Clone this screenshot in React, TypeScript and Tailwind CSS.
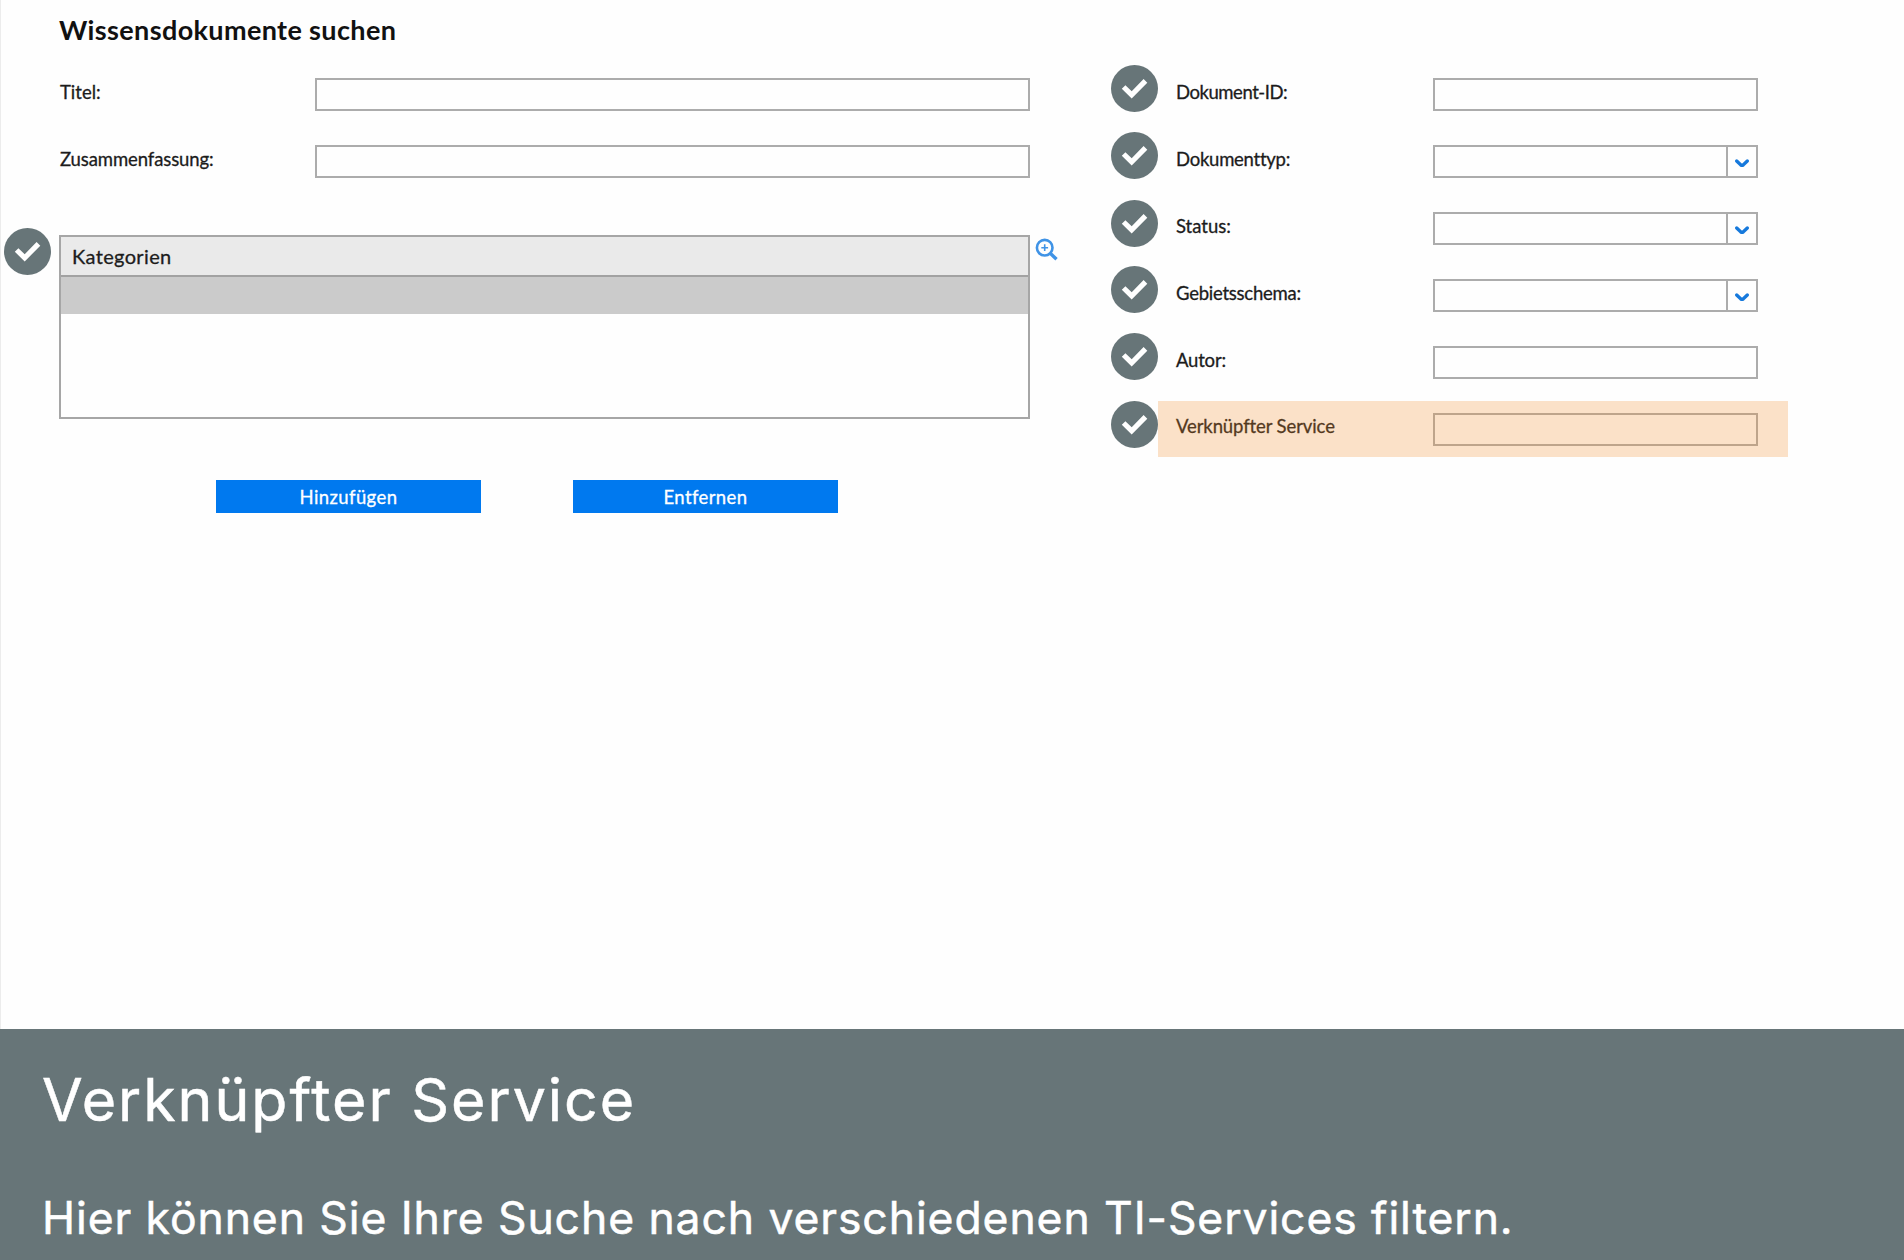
import React from "react";

const label =
  "font-['Lato',sans-serif] text-[18.5px] leading-[24px] text-[#1c1c1c] whitespace-nowrap [-webkit-text-stroke:0.3px_#1c1c1c]";

function Check({ className = "" }: { className?: string }) {
  return (
    <svg viewBox="0 0 47 47" className={`size-[47px] shrink-0 ${className}`}>
      <circle cx="23.5" cy="23.5" r="23.5" fill="#677578" />
      <polygon points="10.8,23.8 14.4,20.2 20.7,26.3 32.6,14 36.3,17.8 20.7,33.4" fill="#fff" />
    </svg>
  );
}

function Field({ select = false, className = "" }: { select?: boolean; className?: string }) {
  return (
    <div className={`flex h-[33px] justify-end border-2 border-[#acacac] ${className}`}>
      {select && (
        <div className="flex w-[30px] items-center justify-center border-l-2 border-[#acacac]">
          <svg viewBox="0 0 14 9" className="mt-[3px] h-[9px] w-[14px]">
            <path d="M1.7 2 5.6 5.8Q7 6.8 8.4 5.8L12.3 2" fill="none" stroke="#1679dc" strokeWidth="3.3" strokeLinecap="round" />
          </svg>
        </div>
      )}
    </div>
  );
}

const filters = [
  { text: "Dokument-ID:", ls: "tracking-[-0.45px]", mark: "mt-0" },
  { text: "Dokumenttyp:", ls: "tracking-[-0.25px]", mark: "mt-0", select: true },
  { text: "Status:", ls: "tracking-[0px]", mark: "mt-[1px]", select: true },
  { text: "Gebietsschema:", ls: "tracking-[-0.25px]", mark: "mt-0", select: true },
  { text: "Autor:", ls: "tracking-[-0.2px]", mark: "mt-0" },
  { text: "Verknüpfter Service", ls: "tracking-[-0.1px]", mark: "mt-[2px]" },
];

export default function App() {
  return (
    <div className="flex h-[1260px] w-[1904px] flex-col overflow-hidden bg-[#fefefe]">
      <main className="flex h-[1029px] border-l border-[#ececec]">
        <section className="w-[1110px] shrink-0">
          <h1 className="ml-[58px] mt-[12px] h-[36px] whitespace-nowrap font-['Lato',sans-serif] text-[27px] font-bold leading-[36px] tracking-[0.37px] text-[#111]">
            Wissensdokumente suchen
          </h1>
          <div className="ml-[59px] mt-[30px] flex h-[67px]">
            <span className={`${label} mt-[2px] w-[255px]`}>Titel:</span>
            <Field className="w-[715px]" />
          </div>
          <div className="ml-[59px] flex h-[67px]">
            <span className={`${label} mt-[2px] w-[255px] tracking-[-0.1px]`}>Zusammenfassung:</span>
            <Field className="w-[715px]" />
          </div>
          <div className="mt-[23px] flex">
            <Check className="-mt-[7px] ml-[3px]" />
            <div className="ml-[8px] h-[184px] w-[971px] border-2 border-[#a6a6a6]">
              <div className="h-[40px] border-b-2 border-[#a2a2a2] bg-[#eaeaea] pl-[11px] font-['Lato',sans-serif] text-[20px] leading-[38px] tracking-[0.35px] text-[#1c1c1c] [-webkit-text-stroke:0.3px_#1c1c1c]">
                Kategorien
              </div>
              <div className="h-[37px] bg-[#cbcbcb]" />
            </div>
            <svg viewBox="0 0 24 24" className="ml-[5px] mt-[3px] size-[24px]" fill="none" stroke="#3f93e6">
              <circle cx="9.7" cy="9.7" r="7.8" strokeWidth="2.6" />
              <path d="M15.5 15.5 21.5 21.3" strokeWidth="3.4" />
              <path d="M6.3 9.7h6.8M9.7 6.3v6.8" strokeWidth="1.6" />
            </svg>
          </div>
          <div className="ml-[215px] mt-[61px] flex gap-[92px] font-['Lato',sans-serif] text-[18.5px] leading-[33px] tracking-[0.4px] text-white [-webkit-text-stroke:0.3px_white]">
            <button className="h-[33px] w-[265px] bg-[#0079ef] pt-px">Hinzufügen</button>
            <button className="h-[33px] w-[265px] bg-[#0079ef] pt-px">Entfernen</button>
          </div>
        </section>
        <section className="pt-[65px]">
          {filters.map((f, i) => (
            <div key={f.text} className="relative flex h-[66.9px]">
              <Check className={f.mark} />
              <span className={`${label} ${f.ls} ml-[18px] mt-[15px] w-[257px]`}>{f.text}</span>
              <Field select={f.select} className="mt-[13.4px] w-[325px]" />
              {i === 5 && <div className="absolute left-[47px] top-[1.5px] h-[56px] w-[630px] bg-[#f58b27]/25" />}
            </div>
          ))}
        </section>
      </main>
      <footer className="h-[231px] bg-[#677578] pl-[42px] pt-[35px] font-['Inter',sans-serif] text-white [-webkit-text-stroke:0.5px_white]">
        <h2 className="whitespace-nowrap text-[59px] leading-[72px] tracking-[2px]">Verknüpfter Service</h2>
        <p className="mt-[55px] whitespace-nowrap text-[44.5px] leading-[54px] tracking-[0.9px]">
          Hier können Sie Ihre Suche nach verschiedenen TI-Services filtern.
        </p>
      </footer>
    </div>
  );
}
